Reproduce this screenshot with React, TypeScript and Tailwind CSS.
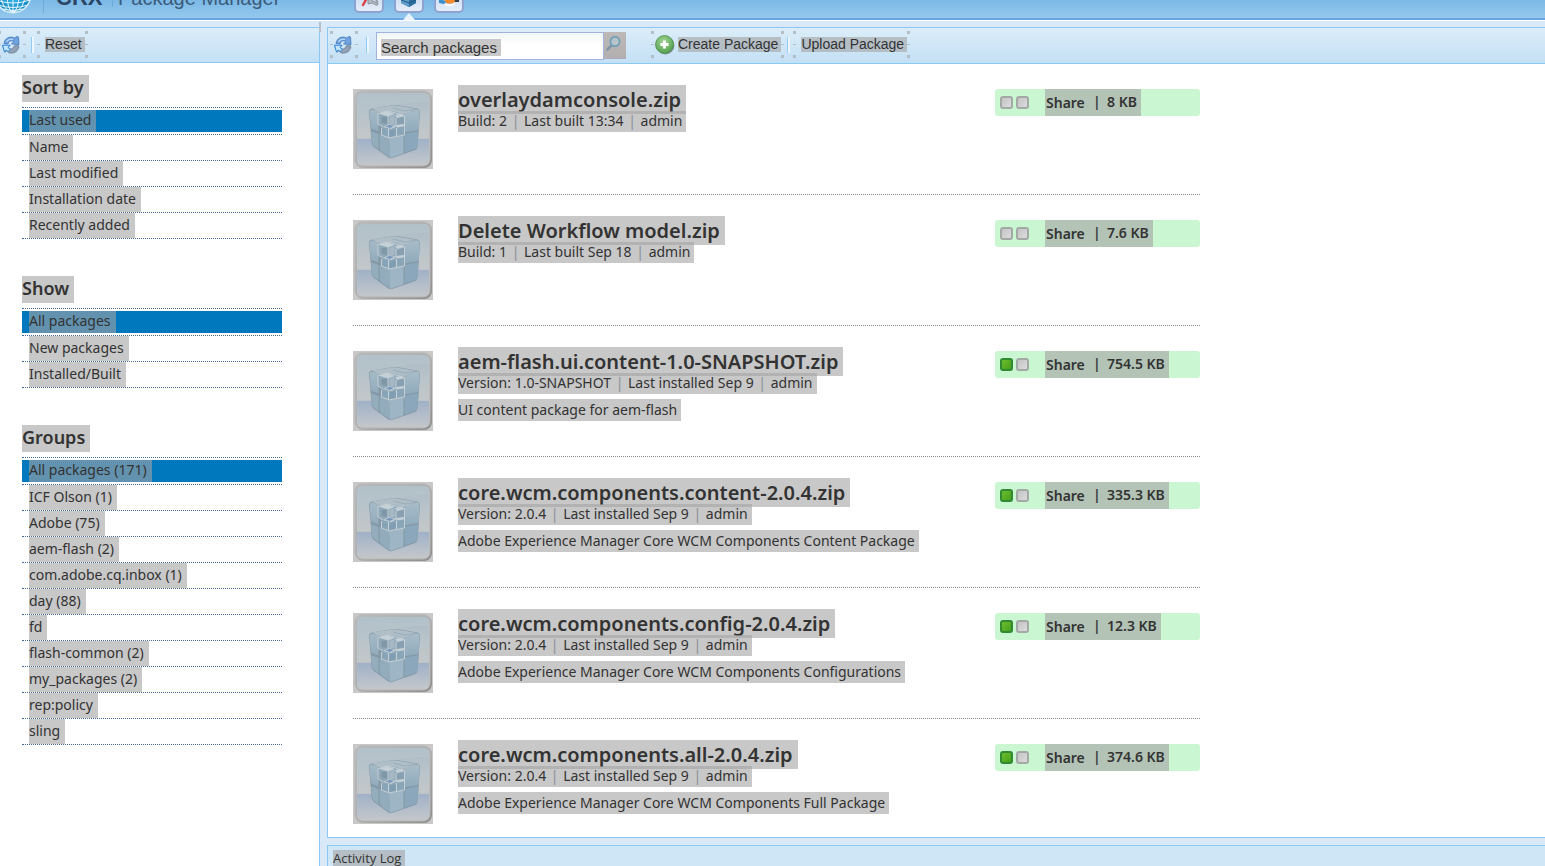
import React from 'react';

interface PackageInfo {
  name: string;
  meta: string[];
  description?: string;
  size: string;
  installed: boolean;
}

interface FilterGroup {
  title: string;
  items: string[];
}

const filterGroups: FilterGroup[] = [
  {
    title: 'Sort by',
    items: ['Last used', 'Name', 'Last modified', 'Installation date', 'Recently added']
  },
  {
    title: 'Show',
    items: ['All packages', 'New packages', 'Installed/Built']
  },
  {
    title: 'Groups',
    items: [
      'All packages (171)',
      'ICF Olson (1)',
      'Adobe (75)',
      'aem-flash (2)',
      'com.adobe.cq.inbox (1)',
      'day (88)',
      'fd',
      'flash-common (2)',
      'my_packages (2)',
      'rep:policy',
      'sling'
    ]
  }
];

const packages: PackageInfo[] = [
  {
    name: 'overlaydamconsole.zip',
    meta: ['Build: 2', 'Last built 13:34', 'admin'],
    size: '8 KB',
    installed: false
  },
  {
    name: 'Delete Workflow model.zip',
    meta: ['Build: 1', 'Last built Sep 18', 'admin'],
    size: '7.6 KB',
    installed: false
  },
  {
    name: 'aem-flash.ui.content-1.0-SNAPSHOT.zip',
    meta: ['Version: 1.0-SNAPSHOT', 'Last installed Sep 9', 'admin'],
    description: 'UI content package for aem-flash',
    size: '754.5 KB',
    installed: true
  },
  {
    name: 'core.wcm.components.content-2.0.4.zip',
    meta: ['Version: 2.0.4', 'Last installed Sep 9', 'admin'],
    description: 'Adobe Experience Manager Core WCM Components Content Package',
    size: '335.3 KB',
    installed: true
  },
  {
    name: 'core.wcm.components.config-2.0.4.zip',
    meta: ['Version: 2.0.4', 'Last installed Sep 9', 'admin'],
    description: 'Adobe Experience Manager Core WCM Components Configurations',
    size: '12.3 KB',
    installed: true
  },
  {
    name: 'core.wcm.components.all-2.0.4.zip',
    meta: ['Version: 2.0.4', 'Last installed Sep 9', 'admin'],
    description: 'Adobe Experience Manager Core WCM Components Full Package',
    size: '374.6 KB',
    installed: true
  }
];

const GlobeLogo: React.FC = () => (
  <svg className="block h-10 w-8 shrink-0" viewBox="0 0 32 40">
    <defs>
      <radialGradient id="globe" cx="0.5" cy="0.6" r="0.6">
        <stop offset="0" stopColor="#35b4e6" />
        <stop offset="1" stopColor="#0a7ab8" />
      </radialGradient>
    </defs>
    <circle cx="13" cy="17" r="18.500" fill="#d6ecf8" />
    <circle cx="13" cy="17" r="17" fill="url(#globe)" />
    <g fill="none" stroke="#e8f7ff" strokeWidth="1">
      <path d="M13 0v34" />
      <ellipse cx="13" cy="17" rx="6" ry="17" />
      <ellipse cx="13" cy="17" rx="12" ry="17" />
      <path d="M-4 22q17 6 34 0M-2 27q15 5 30 0M3 31q10 3 20 0" />
    </g>
  </svg>
);

const RefreshIcon: React.FC = () => (
  <svg className="block h-5 w-5" viewBox="0 0 20 20">
    <path
      d="M8 18.500q8 1.500 10.500-6l-1-3-4 .5-3 4-5 1Z"
      fill="#777c82"
      opacity="0.55"
    />
    <path
      d="M3 8.500C3.500 3.500 9 .5 13.500 3L16 1.500l1.500.5.5 7.500-7.500-.5 2.500-2.500C10.500 5 7.500 6 7 9Z"
      fill="#6fa4e0"
      stroke="#4173b8"
      strokeWidth="0.8"
    />
    <path
      d="M17.500 11c-.5 5.500-6 8-10.500 6l-1.500-1.200L4 17.500 1.500 10.500l7.500 0-2 2.500c2.500 1.800 6 1 6.500-2Z"
      fill="#95a3b4"
      stroke="#6f86a6"
      strokeWidth="0.8"
    />
    <path d="M1.500 10.200H9L7 12.500l2.500 2-2.500 2-1.800-1.500L3.500 17Z" fill="#c4e6fc" stroke="#2f86dc" strokeWidth="1" />
    <path d="M5.500 6.500Q8 3.500 12 4.300" fill="none" stroke="#b9dcf8" strokeWidth="1.200" />
  </svg>
);

const AddIcon: React.FC = () => (
  <svg className="block h-5 w-5" viewBox="0 0 20 20">
    <defs>
      <radialGradient id="add" cx="0.45" cy="0.35" r="0.6">
        <stop offset="0" stopColor="#a8d898" />
        <stop offset="1" stopColor="#57a352" />
      </radialGradient>
    </defs>
    <ellipse cx="10.500" cy="10.500" rx="9" ry="9" fill="#4b5a55" opacity="0.55" />
    <circle cx="9.500" cy="9.500" r="9" fill="url(#add)" stroke="#4f8f50" strokeWidth="0.8" />
    <path d="M9.500 5.500v8M5.500 9.500h8" stroke="#fff" strokeWidth="2.800" />
  </svg>
);

const SearchIcon: React.FC = () => (
  <svg className="block h-5 w-5" viewBox="0 0 20 20">
    <path d="M7.500 11.500L3.500 15.500" stroke="#8098a6" strokeWidth="2.600" strokeLinecap="round" />
    <circle cx="11" cy="7.500" r="4.600" fill="#b9c4c8" stroke="#6f9fba" strokeWidth="1.800" />
  </svg>
);

const PackageIcon: React.FC = () => (
  <svg className="block h-20 w-20" viewBox="0 0 80 80">
    <defs>
      <linearGradient id="tile" x1="0" y1="0" x2="0" y2="1">
        <stop offset="0" stopColor="#abbac6" />
        <stop offset="0.35" stopColor="#bac4ca" />
        <stop offset="0.63" stopColor="#c3c7c9" />
        <stop offset="0.64" stopColor="#a0b1c8" />
        <stop offset="1" stopColor="#c3c7cb" />
      </linearGradient>
      <linearGradient id="frame" x1="0" y1="0" x2="1" y2="1">
        <stop offset="0" stopColor="#b9b9b9" />
        <stop offset="0.5" stopColor="#b0b0b0" />
        <stop offset="1" stopColor="#8e8e8e" />
      </linearGradient>
      <linearGradient id="cubeLeft" x1="0" y1="0" x2="0" y2="1">
        <stop offset="0" stopColor="#a6bac6" />
        <stop offset="1" stopColor="#91abbc" />
      </linearGradient>
      <linearGradient id="cubeRight" x1="0" y1="0" x2="0" y2="1">
        <stop offset="0" stopColor="#a9bdc9" />
        <stop offset="1" stopColor="#8eaabc" />
      </linearGradient>
    </defs>
    <rect width="80" height="80" fill="#c8c8c8" />
    <rect x="3" y="3" width="75" height="75" rx="7" fill="#c6c6c6" stroke="url(#frame)" strokeWidth="2" />
    <rect x="2" y="2" width="75" height="75" rx="7" fill="none" stroke="#b4b4b4" strokeWidth="1" />
    <rect x="4" y="4" width="72" height="72" rx="5" fill="url(#tile)" />
    <path d="M4 9q0-5 5-5h62q5 0 5 5v4Q40 12 4 30Z" fill="#b8c4cc" opacity="0.6" />

    {/* cube body, dark tone shows through as the seams */}
    <path
      d="M16 23q0-3 3-3.500l20-3.300q3-.5 6 0l19 3.300q3 .8 3 4l-2.500 34q-.3 2.500-2.500 3.500l-23 8q-2 .6-4-.8L21 58q-2-1.500-2.300-4Z"
      fill="#8498a5"
    />
    <path d="M19 19.500l20-3q3-.4 6 .2l19 3.300-12 5-27-2Z" fill="#afbec7" />
    <path d="M16.500 23q0-3 3-2.500l6 2.500v19.500l-6-2.300q-1.500-.6-1.800-2.500Z" fill="url(#cubeLeft)" />
    <path d="M18 42.500q3 .3 7.500 2.500v15.500l-4.500-3.700q-1.800-1.500-2-4Z" fill="#93adbd" />
    <path d="M26.500 45l9.500 4 1 19.500-8.500-6q-1.700-1-1.800-3.500Z" fill="#92acbd" />
    <path d="M36 49l14.500-3v17.500q0 1-2 1.500l-11.500 4Z" fill="#9db5c4" />
    <path d="M51.500 25l12-4.500q3-.4 3 2l-.6 16.500q0 2-2 2.300L51.500 43.500Z" fill="url(#cubeRight)" />
    <path d="M51.500 45l12-2.400q2.300 0 2 2.400l-1 12q-.2 2-2.500 3l-10.500 3.500Z" fill="#8ba7bb" />
    <path d="M40 19l12 3 12-2" fill="none" stroke="#94a8b5" strokeWidth="0.800" />

    {/* small cubes in the open corner */}
    <path d="M25 24.500l9-2.500 10 1 7.500 3v20l-15 3-7.500-3.500v-8L25 35Z" fill="#8fa9b9" />
    <path d="M25 24.500l9-2.500 8 3-7 2.500ZM42 26l7-1.500 3 2.500-8 2ZM30 38l6-3 8 2-6 3ZM43 36l8-1v2.500l-7 1Z" fill="#c4cfd6" />
    <path d="M28.500 28l6.500-.5v7.500l-6.500-1Z" fill="#7e98a8" />
    <path d="M36.500 28l5-2v9l-5 .5Z" fill="#a5b8c4" />
    <path d="M43.500 30l7.500-2v6.500l-7.500 1Z" fill="#87a1b2" />
    <path d="M32.500 37.500l4-1.700 4.500 1.200-4 2Z" fill="#7898bb" />
    <path d="M29.500 39.500l5 1.500v6.500l-5-2.500Z" fill="#86a4b8" />
    <path d="M36.500 41.500l6-1.500v6.500l-6 1.500Z" fill="#7f9eb3" />
    <path d="M44.500 39l6.500-1.500v7l-6.500 1.500Z" fill="#89a6b8" />
    <path
      d="M25 24.500l9-2.500 9 2 8.500 2.500M25 24.500V35l5 3M35 27v8M43 29v8M28.500 39v7l7.500 3 15.500-3V27M35.500 40v8.500M43.500 39v8"
      fill="none"
      stroke="#c4ced4"
      strokeWidth="1"
    />
  </svg>
);

/* Square marks around a toolbar cell */
const CellMarks: React.FC = () => (
  <span aria-hidden="true" className="pointer-events-none absolute inset-0">
    <span className="absolute top-0 left-0 h-[3px] w-[3px] bg-[#b2bec6]" />
    <span className="absolute top-0 right-0 h-[3px] w-[3px] bg-[#b2bec6]" />
    <span className="absolute bottom-0 left-0 h-[3px] w-[3px] bg-[#b2bec6]" />
    <span className="absolute right-0 bottom-0 h-[3px] w-[3px] bg-[#b2bec6]" />
    <span className="absolute top-[13px] left-0 h-px w-[3px] bg-[#b2bec6]" />
    <span className="absolute top-[13px] right-0 h-px w-[3px] bg-[#b2bec6]" />
  </span>
);

interface ToolButtonProps {
  label: string;
  icon?: React.ReactNode;
}

const ToolButton: React.FC<ToolButtonProps> = ({ label, icon }) => (
  <button
    type="button"
    className={`relative flex h-[27px] items-start gap-[3px] pr-[3px] ${icon ? 'pl-1' : 'pl-2'}`}
  >
    {icon && <span className="pt-1">{icon}</span>}
    <span className="mt-[6px] bg-[#a4a4a4]/60 pr-[3px] text-sm leading-[15px] whitespace-nowrap">{label}</span>
    <CellMarks />
  </button>
);

const RefreshButton: React.FC = () => (
  <button type="button" aria-label="Refresh" className="relative h-[27px] w-7 shrink-0 pl-[3px]">
    <RefreshIcon />
    <CellMarks />
  </button>
);

const ToolSeparator: React.FC<{ className?: string }> = ({ className = '' }) => (
  <span className={`h-4 w-[3px] shrink-0 border-l border-[#8fcdf8] bg-[#eef7fd] ${className}`} />
);

interface HeaderTileProps {
  label: string;
  children: React.ReactNode;
}

const HeaderTile: React.FC<HeaderTileProps> = ({ label, children }) => (
  <a
    href="#"
    aria-label={label}
    className="block h-[30px] w-[30px] rounded-[5px] border-2 border-[#8ea2cf] bg-gradient-to-b from-[#b9d0ee] to-[#e6edf9]"
  >
    <svg className="block h-[26px] w-[26px]" viewBox="2 0 26 26">
      <g transform="translate(0 2)">{children}</g>
    </svg>
  </a>
);

const Header: React.FC = () => (
  <header className="relative z-10 h-[21px] shrink-0 border-b border-white bg-[#6ca3e2] pb-[2px]">
    <div className="flex h-[18px] items-end overflow-hidden bg-gradient-to-b from-[#7bb9e7] to-[#94c8ec]">
      <GlobeLogo />
      <span className="ml-[11px] h-[13px] w-px self-start bg-[#6fa9d8]" />
      <div className="ml-3 flex w-[310px] items-end leading-10 text-[#3c5b7b]">
        <span className="w-14 text-[22px] font-bold text-[#2b4564]">CRX</span>
        <span className="mr-[5px] mb-[11px] h-[29px] w-px bg-[#6fa9d8]" />
        <span className="text-[20px] whitespace-nowrap">Package Manager</span>
      </div>
    </div>
    <nav className="absolute bottom-[7px] left-[354px] flex h-[14px] items-end gap-[10px] overflow-hidden">
      <HeaderTile label="Content Explorer">
        <path d="M9 18l4-7" stroke="#d8434a" strokeWidth="2.500" strokeLinecap="round" />
        <path d="M14 11q3-2 5 0l-1 3 6 2q0 3-2 2l-4-2-4 1Z" fill="#b4bac2" stroke="#7c858f" strokeWidth="0.800" />
        <path d="M20 11l4 4" stroke="#8a929a" fill="none" strokeWidth="1.500" />
      </HeaderTile>
      <HeaderTile label="Package Manager">
        <path d="M7 5l7-2 8 2v11l-7 4-8-4Z" fill="#3c7fae" />
        <path d="M7 8l8 3v9l-8-4Z" fill="#5b9cc8" />
        <path d="M15 11l7-3v8l-7 4Z" fill="#2f6f9e" />
        <path d="M7 13l8 3 7-3" stroke="#1f5a87" fill="none" />
      </HeaderTile>
      <HeaderTile label="Package Share">
        <path d="M9 11q6-4 13 0l-1 4q-4 3-9 1Z" fill="#f08a2c" />
        <path d="M5 13q4-1 7 2l-2 2-5-1Z" fill="#3b8fd0" />
        <path d="M20 9l5 1 0 5-4 0Z" fill="#34404c" />
        <path d="M11 18q5 1 10-1" stroke="#fff" fill="none" strokeWidth="1.500" />
      </HeaderTile>
    </nav>
    <svg className="absolute bottom-0 left-[403px] block h-[7px] w-3" viewBox="0 0 12 7">
      <path d="M6 0l6 7H0Z" fill="#e9f3fc" />
    </svg>
  </header>
);

const FilterList: React.FC<{ group: FilterGroup }> = ({ group }) => (
  <section>
    <h2 className="mb-[5px] w-fit bg-[#a4a4a4]/60 pr-[5px] pb-[2px] text-[18px] leading-[25px] font-semibold">
      {group.title}
    </h2>
    <ul className="border-t border-dotted border-[#44699c] pt-px">
      {group.items.map((item, index) => (
        <li
          key={item}
          className={`h-[26px] border-b border-dotted border-[#44699c] ${index === 0 ? 'pt-px' : ''}`}
        >
          <a
            href="#"
            className={
              index === 0 ? 'flex bg-[#0078bd] pl-[7px] leading-5' : 'flex pl-[7px] leading-[23px]'
            }
          >
            <span className="bg-[#a4a4a4]/60 pr-[5px] pb-[2px]">{item}</span>
          </a>
        </li>
      ))}
    </ul>
  </section>
);

const StatusLight: React.FC<{ on?: boolean }> = ({ on = false }) => (
  <span
    className={`h-[13px] w-[13px] rounded-[3px] border-2 ${
      on
        ? 'border-[#2f8a33] bg-gradient-to-br from-[#6cbd2c] to-[#45a01c]'
        : 'border-[#a3aaa5] bg-gradient-to-br from-[#c4c4c4] to-[#dcdcdc]'
    }`}
  />
);

const PackageRow: React.FC<{ pkg: PackageInfo }> = ({ pkg }) => (
  <li className="flex h-[131px] items-start border-b border-dotted border-[#8c8c8c] pt-[25px]">
    <PackageIcon />
    <div className="-mt-1 ml-[25px] flex flex-1 flex-col items-start whitespace-nowrap">
      <h3 className="bg-[#a4a4a4]/60 pr-[5px] text-[20px] leading-[29px] font-semibold">{pkg.name}</h3>
      <p className="-mt-[3px] bg-[#a4a4a4]/60 pr-1 pb-px leading-5">
        {pkg.meta.map((part, index) => (
          <React.Fragment key={part}>
            {index > 0 && <span className="mx-px text-[#8a8f99]"> | </span>}
            {part}
          </React.Fragment>
        ))}
      </p>
      {pkg.description && (
        <p className="mt-[5px] bg-[#a4a4a4]/60 pr-1 leading-[22px]">{pkg.description}</p>
      )}
    </div>
    <div className="flex h-[27px] w-[205px] shrink-0 items-center gap-[3px] rounded-[3px] bg-[#caf6d2] pl-[5px]">
      <StatusLight on={pkg.installed} />
      <StatusLight />
      <div className="ml-[13px] flex h-full bg-[#a4a4a4]/60 pr-1 pl-px leading-[25px] font-semibold">
        <button type="button" className="w-[47px] text-left leading-[25px]">Share</button>
        <span className="w-[14px]">|</span>
        <span>{pkg.size}</span>
      </div>
    </div>
  </li>
);

const App: React.FC = () => {
  return (
    <div className="flex h-screen flex-col overflow-hidden bg-[#d9e9f8] font-['Liberation_Sans',sans-serif] text-[#333]">
      <Header />
      <div className="flex min-h-0 flex-1 gap-[7px] pt-[6px]">
        <aside className="relative w-80 shrink-0 border-t border-r border-[#8cc8f4] bg-white">
          <div className="flex h-[35px] items-start border-b border-[#8cc8f4] bg-gradient-to-b from-[#dcedf9] to-[#c3e0f5] pt-[3px]">
            <div className="-ml-[2px] flex items-center">
              <RefreshButton />
              <ToolSeparator className="mr-[3px] ml-[5px]" />
              <ToolButton label="Reset" />
            </div>
          </div>
          <div className="flex w-[282px] flex-col gap-[37px] pt-3 pl-[22px] font-['Noto_Sans',sans-serif] text-sm">
            {filterGroups.map((group) => (
              <FilterList key={group.title} group={group} />
            ))}
          </div>
          <span className="absolute -top-[6px] -right-[2px] h-[10px] w-[2px] bg-[#b8bfc6]" />
        </aside>

        <div className="flex min-w-0 flex-1 flex-col gap-[7px]">
          <main className="min-h-0 flex-1 overflow-hidden border-y border-l border-[#8cc8f4] bg-white">
            <div className="flex h-9 items-start border-b border-[#8cc8f4] bg-gradient-to-b from-[#dcedf9] to-[#c3e0f5] pt-[3px] pl-[2px]">
              <RefreshButton />
              <ToolSeparator className="mt-[6px] mr-[7px] ml-2" />
              <form className="mt-px flex h-7 w-[250px] shrink-0" onSubmit={(event) => event.preventDefault()}>
                <div className="flex flex-1 items-center border border-[#a3b3e0] bg-gradient-to-b from-[#eef6f4] to-white to-40% pt-[2px] pl-1">
                  <input
                    type="text"
                    aria-label="Search packages"
                    defaultValue="Search packages"
                    className="h-[17px] bg-[#c8c8c8] pr-1 text-[15px] leading-[17px] outline-none [field-sizing:content]"
                  />
                </div>
                <button
                  type="submit"
                  aria-label="Search"
                  className="flex h-[27px] w-[22px] border-b border-[#b0a8c0] bg-gradient-to-b from-[#bdb9b8] to-[#b3afae] pt-[2px]"
                >
                  <SearchIcon />
                </button>
              </form>
              <div className="ml-[25px] flex items-center">
                <ToolButton label="Create Package" icon={<AddIcon />} />
                <ToolSeparator className="mx-[3px]" />
                <ToolButton label="Upload Package" />
              </div>
            </div>
            <ul className="w-[872px] pl-[25px] font-['Noto_Sans',sans-serif] text-sm">
              {packages.map((pkg) => (
                <PackageRow key={pkg.name} pkg={pkg} />
              ))}
            </ul>
          </main>
          <footer className="flex h-[21px] shrink-0 items-start border-t border-l border-[#8cc8f4] bg-[#cfe6f6] pt-1 pl-[5px]">
            <span className="bg-[#a4a4a4]/60 pr-1 pb-px font-['Open_Sans',sans-serif] text-[13px] leading-4">
              Activity Log
            </span>
          </footer>
        </div>
      </div>
    </div>
  );
};

export default App;
